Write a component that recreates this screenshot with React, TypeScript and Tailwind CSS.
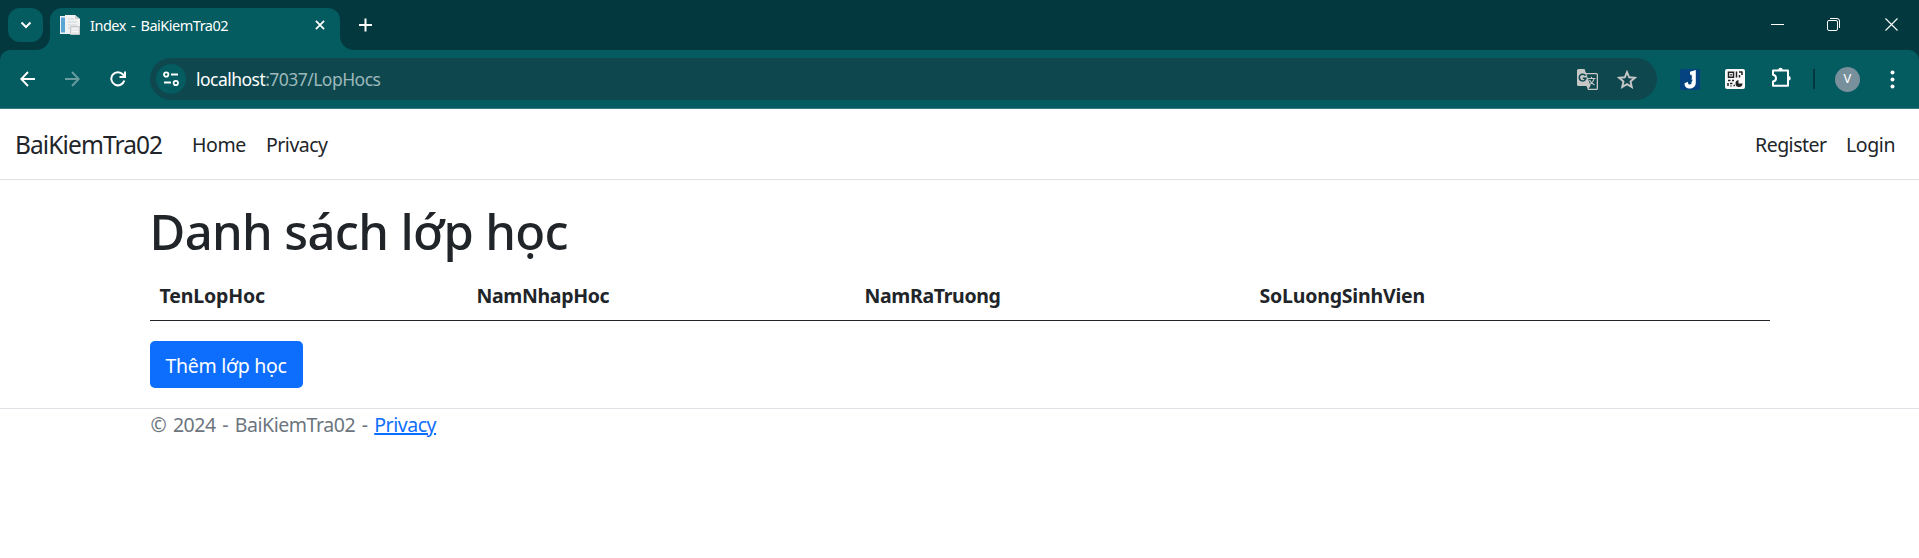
import React from "react";

const columns = [
  { name: "TenLopHoc", width: "w-[317px]", tracking: "tracking-[-0.15px]" },
  { name: "NamNhapHoc", width: "w-[388px]", tracking: "tracking-[-0.35px]" },
  { name: "NamRaTruong", width: "w-[395px]", tracking: "tracking-[-0.35px]" },
  { name: "SoLuongSinhVien", width: "w-[520px]", tracking: "tracking-[-0.2px]" },
];

function TabStrip() {
  return (
    <div className="flex h-[50px] bg-[#03393e] text-white">
      <div className="ml-2 mt-2 flex h-[34px] w-[35px] items-center justify-center rounded-xl bg-[#045b60]">
        <svg width="12" height="8" viewBox="0 0 12 8" fill="none" stroke="white" strokeWidth="2">
          <path d="M1.500 1.500 6 6l4.500-4.500" />
        </svg>
      </div>
      <div className="-ml-[7px] flex items-end">
        <svg width="14" height="14" viewBox="0 0 14 14" fill="#045b60">
          <path d="M14 0v14H0A14 14 0 0 0 14 0Z" />
        </svg>
      </div>
      <div className="mt-2 flex h-[42px] w-[290px] items-start rounded-t-xl bg-[#045b60]">
        <svg className="ml-[10px] mt-[7px]" width="20" height="20" viewBox="0 0 20 20">
          <path d="M0 1h7v18H0z" fill="#eef2f4" />
          <path d="M1 2.500h4v15H1z" fill="#5aa5d3" />
          <path d="M5 0h10l5 4v15H5z" fill="#f2f2f3" />
          <path d="M15 0v4h5z" fill="#c9cdd0" />
          <path d="M8 4h6M8 7h9M8 10h9M8 13h2" stroke="#cfd4d8" />
          <path d="M10.500 11.500h9v8h-9z" fill="#e4e6e8" stroke="#c4c8cb" />
          <path d="M12 14h6M12 16.500h6" stroke="#f8f8f8" />
        </svg>
        <span className="ml-[10px] mt-[7px] w-[200px] whitespace-nowrap font-['Noto_Sans'] text-[14.5px] leading-[20px] tracking-[-0.5px] [word-spacing:2px]">
          Index - BaiKiemTra02
        </span>
        <svg className="ml-[25px] mt-[12px]" width="10" height="10" viewBox="0 0 11 11" stroke="white" strokeWidth="1.900">
          <path d="m1 1 9 9M10 1l-9 9" />
        </svg>
      </div>
      <div className="flex items-end">
        <svg width="14" height="14" viewBox="0 0 14 14" fill="#045b60">
          <path d="M0 0v14h14A14 14 0 0 1 0 0Z" />
        </svg>
      </div>
      <svg className="ml-[5px] mt-[18px]" width="13" height="14" viewBox="0 0 13 14" stroke="white" strokeWidth="2">
        <path d="M6.500.5v13M0 7h13" />
      </svg>
      <div className="ml-auto mr-[21px] mt-[18px] flex h-[14px] items-start">
        <svg className="mr-[43px]" width="13" height="13" viewBox="0 0 13 13" stroke="white">
          <path d="M0 6.500h13" />
        </svg>
        <svg className="mr-[45px]" width="13" height="13" viewBox="0 0 13 13" fill="none" stroke="white">
          <rect x=".5" y="2.500" width="10" height="10" rx="1.500" />
          <path d="M3 .5h7a2.500 2.500 0 0 1 2.500 2.500v7" />
        </svg>
        <svg width="13" height="13" viewBox="0 0 13 13" stroke="white" strokeWidth="1.100">
          <path d="m.5.5 12 12M12.500.5l-12 12" />
        </svg>
      </div>
    </div>
  );
}

function Toolbar() {
  return (
    <div className="bg-[#03393e]">
      <div className="flex h-[59px] items-center rounded-t-[10px] border-b border-[#387c80] bg-[#045b60]">
        <svg className="ml-5" width="15" height="16" viewBox="0 0 15 16" fill="none" stroke="white" strokeWidth="1.900">
          <path d="M15 8H1.500M8 1 1.300 8 8 15" />
        </svg>
        <svg className="ml-[30px] opacity-40" width="15" height="16" viewBox="0 0 15 16" fill="none" stroke="white" strokeWidth="1.900">
          <path d="M0 8h13.500M7 1l6.700 7L7 15" />
        </svg>
        <svg className="ml-[30px]" width="16" height="16" viewBox="0 0 16 16" fill="none" stroke="white" strokeWidth="2">
          <path d="M14.300 9.500A6.600 6.600 0 1 1 13 3.500L14.500 5.500" />
          <path d="M15 .5V6H9.500" />
        </svg>
        <div className="ml-6 flex h-[42px] w-[1507px] items-center rounded-full bg-[#0e484e]">
          <div className="ml-[6px] flex size-[30px] items-center justify-center rounded-full bg-[#045b60]">
            <svg width="16" height="16" viewBox="0 0 16 16" fill="none" stroke="white" strokeWidth="1.800">
              <circle cx="3.200" cy="3.500" r="2.200" />
              <path d="M8 3.500h7M1 11.500h7" />
              <circle cx="12.800" cy="12" r="2.200" />
            </svg>
          </div>
          <span className="ml-[10px] whitespace-nowrap font-['Noto_Sans'] text-[17.5px] leading-6 tracking-[-0.53px] text-[#9db8bb]">
            <span className="text-white">localhost</span>:7037/LopHocs
          </span>
          <svg className="ml-auto" width="21" height="21" viewBox="0 0 21 21">
            <path d="M1.500 0h6l1.500 4h10.500A1.500 1.500 0 0 1 21 5.500v14a1.500 1.500 0 0 1-1.500 1.500H11l-1.500-4h-8A1.500 1.500 0 0 1 0 15.500v-14A1.500 1.500 0 0 1 1.500 0Z" fill="#c7c7c7" />
            <path d="M9.500 5.300h10.200v14.400h-8.200l2-2.700z" fill="#0e484e" />
            <path d="M8.500 6.700A3.400 3.400 0 1 0 9 9.200H5.800" fill="none" stroke="#0e484e" strokeWidth="1.500" />
            <path d="M11 9.500h7.500M14.500 7.800v1.700M17 9.500c-.5 2.500-2.500 5-5 6.500M12.500 11c1 2.200 3 4 5 5" fill="none" stroke="#c7c7c7" strokeWidth="1.200" />
          </svg>
          <svg className="ml-[19px] mr-5" width="20" height="19" viewBox="0 0 20 19" fill="none" stroke="#c7c7c7" strokeWidth="1.900">
            <path d="m10 2.100 2.200 5.200 5.600.5-4.300 3.700 1.300 5.500L10 14.100l-4.800 2.900 1.300-5.500-4.300-3.700 5.600-.5z" />
          </svg>
        </div>
        <svg className="ml-[23px]" width="20" height="21" viewBox="0 0 20 21">
          <rect width="20" height="21" rx="2" fill="#04437f" />
          <path d="M10 2.800 15.800 1v12.500c0 3.500-2.300 6-5.900 6-3.400 0-5.400-2-5.400-5.300l3.300-1.400c0 1.700.7 2.600 2 2.600 1.200 0 1.800-.7 1.800-2.200V5.500L10 6z" fill="white" />
          <path d="m10.800 7.500-3.300 4.700h2.200l-1 3.800 4.300-5.300h-2.400l1.700-3.200z" fill="#04437f" />
        </svg>
        <svg className="ml-[25px]" width="20" height="20" viewBox="0 0 20 20">
          <rect width="20" height="20" rx="2" fill="#fafafa" />
          <g fill="none" stroke="#222" strokeWidth="1.500">
            <path d="M3.500 3.200h5v5h-5zM11.500 2.500v6M14 3h3.500M17 3v3M14.500 6v2.500" />
            <path d="M3 11.500h2.500M7 11.500h2M5 14.500h2.500M3 14v3M8.500 16.500h1.500M5.500 17h1" />
          </g>
          <path d="M5.300 5h1.500v1.500H5.300z" fill="#222" />
          <path d="M13.500 11v3.500h4a3.500 3.500 0 1 1-4-3.500Z" fill="#222" />
        </svg>
        <svg className="-mt-[3px] ml-[26px]" width="21" height="21" viewBox="0 0 21 21" fill="none" stroke="white" strokeWidth="2">
          <path d="M2 3.500h15v15.300H2v-4.300q3-.5 3-3.300T2 7.800Z" strokeLinejoin="round" />
          <path d="M7.300 3a2.200 2.200 0 0 1 4.400 0zM17.500 9a2.200 2.200 0 0 1 0 4.500z" fill="white" stroke="none" />
        </svg>
        <div className="ml-[21px] h-5 w-[2px] bg-[#03393e]" />
        <div className="ml-5 flex size-[25px] items-center justify-center rounded-full bg-[#78909c] font-['Noto_Sans'] text-[13px] text-white">
          V
        </div>
        <svg className="ml-[30px]" width="5" height="19" viewBox="0 0 5 19" fill="white">
          <circle cx="2.500" cy="2.500" r="2" />
          <circle cx="2.500" cy="9.500" r="2" />
          <circle cx="2.500" cy="16.500" r="2" />
        </svg>
      </div>
    </div>
  );
}

export default function App() {
  return (
    <div className="min-h-[558px] w-[1919px] overflow-hidden bg-white font-['Noto_Sans',sans-serif] text-[#212529]">
      <TabStrip />
      <Toolbar />
      <nav className="flex h-[71px] items-center whitespace-nowrap border-b border-[#dee2e6] pt-[2px] text-[19.5px] leading-[30px]">
        <a className="ml-[15px] w-[147px] text-[24.5px] tracking-[-0.9px]">BaiKiemTra02</a>
        <a className="ml-[30px] w-[54px] tracking-[-0.4px]">Home</a>
        <a className="ml-5 tracking-[-0.5px]">Privacy</a>
        <a className="ml-auto w-[71px] tracking-[-0.5px]">Register</a>
        <a className="ml-5 mr-[24px] w-[49px] tracking-[-0.4px]">Login</a>
      </nav>
      <main className="mx-auto w-[1620px] pb-5 pt-[19px]">
        <h1 className="h-[71px] whitespace-nowrap text-[49px] font-medium leading-[64px] tracking-[-0.65px]">Danh sách lớp học</h1>
        <div className="flex h-[51px] border-b border-[#212529] pt-[11px] text-[19.5px] font-bold leading-[30px]">
          {columns.map((c) => (
            <div key={c.name} className={`${c.width} ${c.tracking} whitespace-nowrap pl-[10px]`}>
              {c.name}
            </div>
          ))}
        </div>
        <button className="mt-5 flex h-[47px] w-[153px] items-center justify-center whitespace-nowrap rounded-[5px] bg-[#0d6efd] pt-[2px] text-[19.5px] leading-[30px] tracking-[-0.3px] text-white">
          Thêm lớp học
        </button>
      </main>
      <footer className="border-t border-[#dee2e6]">
        <div className="mx-auto w-[1620px] whitespace-nowrap pl-px text-[19.5px] leading-[32px] tracking-[-0.45px] text-[#6c757d] [word-spacing:2px]">
          © 2024 - BaiKiemTra02 - <a className="text-[#0d6efd] underline decoration-2">Privacy</a>
        </div>
      </footer>
    </div>
  );
}
